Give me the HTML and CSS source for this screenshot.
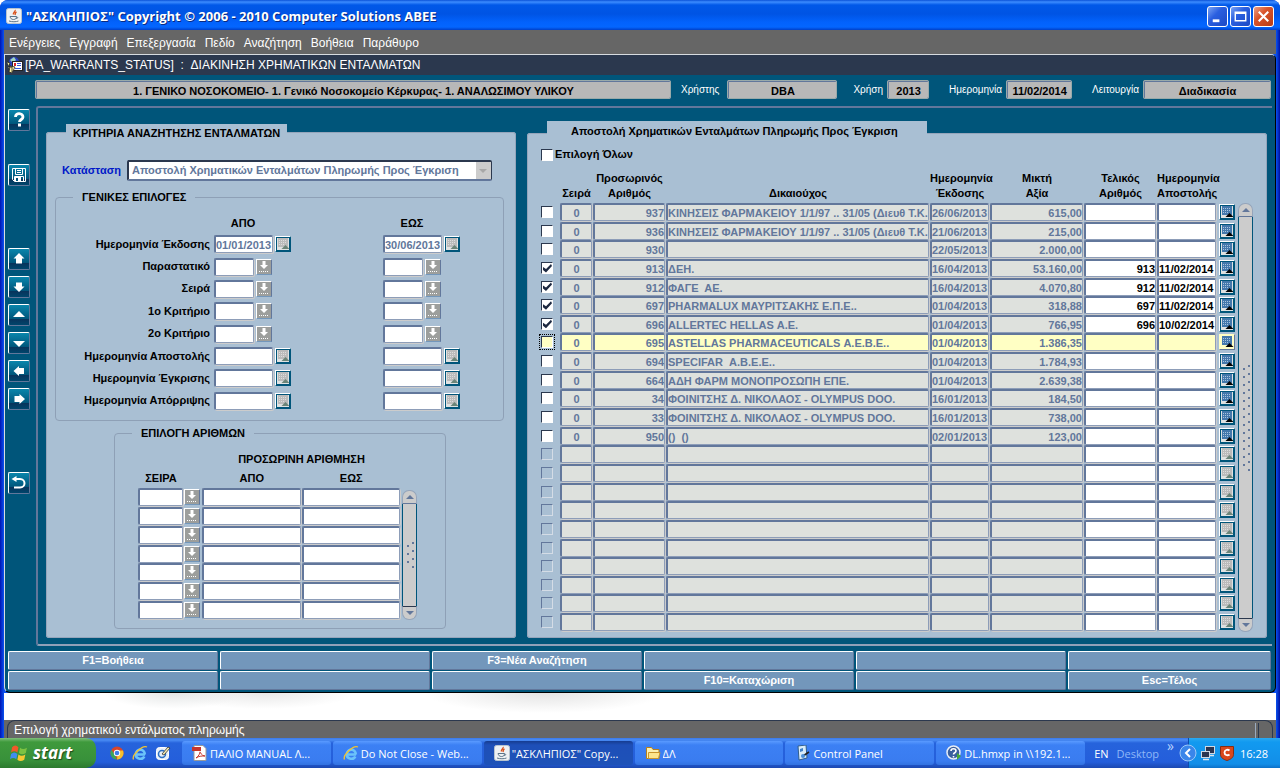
FILE: index.html
```html
<!DOCTYPE html>
<html lang="el">
<head>
    <meta charset="UTF-8">
    <meta name="viewport" content="width=device-width, initial-scale=1.0">
    <title>"ΑΣΚΛΗΠΙΟΣ" Copyright © 2006 - 2010 Computer Solutions ABEE</title>
    <link rel="stylesheet" href="styles.css">
</head>
<body>
    <!-- shared icons -->
    <svg class="sprite" xmlns="http://www.w3.org/2000/svg">
        <symbol id="i-java" viewBox="0 0 16 16">
            <rect x="0.5" y="0.5" width="15" height="15" rx="2" fill="#eef1f4" stroke="#b9c4cf"/>
            <path d="M9 2c1 1.500-2.500 2.500-1.500 4.500M10.500 4c-2 1-1 2-1.500 3" stroke="#d9531e" fill="none" stroke-width="1.400"/>
            <path d="M4 8.500h6.500c0 2-1 3-3 3s-3-1-3.500-3zM10.500 9c2 0 1.500 1.500-.5 1.500M3 13c3 1 7 1 9.500 0" stroke="#5b7489" fill="none"/>
        </symbol>
        <symbol id="i-form" viewBox="0 0 16 16">
            <circle cx="7" cy="5" r="5" fill="#2b44c4"/>
            <path d="M3 3l4-3 2 3-3 3z" fill="#9fd6c0"/>
            <rect x="5.500" y="4.500" width="10" height="9" fill="#fff" stroke="#222"/>
            <path d="M10 6.500h4M10 8.500h4M8 11.500h6" stroke="#3358d8"/>
            <rect x="7" y="6" width="2" height="3" fill="#d22"/>
            <path d="M0 5l3 1-1 3M1 10h4v5M3 9l5 1-3 6-3-1z" fill="#fff3a8" stroke="#222" stroke-width=".8"/>
        </symbol>
        <symbol id="i-help" viewBox="0 0 20 20">
            <path d="M6.500 7c0-5 7.500-4 7.500 0 0 2.500-3.500 2.500-3.500 5" fill="none" stroke="#fff" stroke-width="2.800"/>
            <rect x="9" y="13.500" width="3" height="3" fill="#fff"/>
        </symbol>
        <symbol id="i-save" viewBox="0 0 20 20">
            <path d="M3.500 3.500h13v13h-11l-2-2z" fill="none" stroke="#fff"/>
            <path d="M6.500 3.500v6h7v-6M5.500 16v-4.500h9v4.500" fill="none" stroke="#fff"/>
            <path d="M8 5.500h4M8 7.500h4" stroke="#fff"/>
            <rect x="6" y="12" width="6" height="4" fill="#fff"/>
            <rect x="7" y="13" width="2" height="3" fill="#00557a"/>
        </symbol>
        <symbol id="i-up" viewBox="0 0 20 20"><path d="M10 4l5.500 5.500h-2.500v5h-6v-5h-2.500z" fill="#fff"/></symbol>
        <symbol id="i-down" viewBox="0 0 20 20"><path d="M10 15l-5.500-5.500h2.500v-4h6v4h2.500z" fill="#fff"/></symbol>
        <symbol id="i-tri-up" viewBox="0 0 20 20"><path d="M10 6l6 6h-12z" fill="#fff"/></symbol>
        <symbol id="i-tri-down" viewBox="0 0 20 20"><path d="M10 14l-6-6h12z" fill="#fff"/></symbol>
        <symbol id="i-left" viewBox="0 0 20 20"><path d="M4.500 10l5.500-5v2h5v6h-5v2z" fill="#fff"/></symbol>
        <symbol id="i-right" viewBox="0 0 20 20"><path d="M16 10l-5.500-5v2h-5v6h5v2z" fill="#fff"/></symbol>
        <symbol id="i-exit" viewBox="0 0 20 20">
            <path d="M5 6h6c6 0 6 8.500 0 8.500h-6" fill="none" stroke="#fff" stroke-width="2"/>
            <path d="M7.500 3l-5 3 5 3z" fill="#fff"/>
        </symbol>
        <symbol id="i-list" viewBox="0 0 14 14">
            <path d="M5.500 1h3v4h2.500l-4 4-4-4h2.500z" fill="#fff"/>
            <path d="M2 11.500h10" stroke="#fff" stroke-dasharray="1 1"/>
        </symbol>
        <symbol id="i-cal" viewBox="0 0 14 14">
            <rect x="2" y="1" width="10" height="9" fill="var(--page)"/>
            <path d="M3 3.500h8M3 5.500h8M3 7.500h6" stroke="var(--dots)" stroke-dasharray="1 1"/>
            <path d="M9.500 8l4 4h-8z" fill="var(--tip)"/>
        </symbol>
        <symbol id="i-ie" viewBox="0 0 16 16">
            <path d="M13 9.500h-8.500M12.800 9.500c0-6.500-9-6.500-9 0 0 5 7 5.500 8.500 2" fill="none" stroke="#6cc4fa" stroke-width="2.600"/>
            <path d="M1.500 14.500c-2-4 9-15 13.500-12.500" fill="none" stroke="#f4c430" stroke-width="1.300"/>
        </symbol>
    </svg>

    <div class="window">
        <header class="title-bar">
            <svg class="icon16"><use href="#i-java"/></svg>
            <h1>"ΑΣΚΛΗΠΙΟΣ" Copyright © 2006 - 2010 Computer Solutions ABEE</h1>
            <button class="win-btn" aria-label="Minimize"><svg viewBox="0 0 20 20"><rect x="5" y="13" width="7" height="3" fill="#fff"/></svg></button>
            <button class="win-btn" aria-label="Maximize"><svg viewBox="0 0 20 20"><path d="M4.500 5.500h11v9h-11zM4 6.500h12" fill="none" stroke="#fff" stroke-width="1.500"/></svg></button>
            <button class="win-btn close" aria-label="Close"><svg viewBox="0 0 20 20"><path d="M5 5l10 10M15 5l-10 10" stroke="#fff" stroke-width="2.200"/></svg></button>
        </header>

        <nav class="menu-bar">
            <button>Ενέργειες</button>
            <button>Εγγραφή</button>
            <button>Επεξεργασία</button>
            <button>Πεδίο</button>
            <button>Αναζήτηση</button>
            <button>Βοήθεια</button>
            <button>Παράθυρο</button>
        </nav>

        <div class="app">
            <div class="form-title">
                <svg class="icon16"><use href="#i-form"/></svg>
                <span>[PA_WARRANTS_STATUS] &nbsp;: &nbsp;ΔΙΑΚΙΝΗΣΗ ΧΡΗΜΑΤΙΚΩΝ ΕΝΤΑΛΜΑΤΩΝ</span>
            </div>

            <div class="info-bar">
                <output class="info org">1. ΓΕΝΙΚΟ ΝΟΣΟΚΟΜΕΙΟ- 1. Γενικό Νοσοκομείο Κέρκυρας- 1. ΑΝΑΛΩΣΙΜΟΥ ΥΛΙΚΟΥ</output>
                <label for="user">Χρήστης</label>
                <output class="info user" id="user">DBA</output>
                <label for="year">Χρήση</label>
                <output class="info year" id="year">2013</output>
                <label for="today">Ημερομηνία</label>
                <output class="info today" id="today">11/02/2014</output>
                <label for="mode">Λειτουργία</label>
                <output class="info mode" id="mode">Διαδικασία</output>
            </div>

            <div class="workspace">
                <div class="side-bar">
                    <button aria-label="Βοήθεια"><svg><use href="#i-help"/></svg></button>
                    <button class="after-one" aria-label="Αποθήκευση"><svg><use href="#i-save"/></svg></button>
                    <button class="after-two" aria-label="Πρώτη"><svg><use href="#i-up"/></svg></button>
                    <button aria-label="Τελευταία"><svg><use href="#i-down"/></svg></button>
                    <button aria-label="Προηγούμενη"><svg><use href="#i-tri-up"/></svg></button>
                    <button aria-label="Επόμενη"><svg><use href="#i-tri-down"/></svg></button>
                    <button aria-label="Αριστερά"><svg><use href="#i-left"/></svg></button>
                    <button aria-label="Δεξιά"><svg><use href="#i-right"/></svg></button>
                    <button class="after-two" aria-label="Έξοδος"><svg><use href="#i-exit"/></svg></button>
                </div>

                <main class="panels">
                    <fieldset class="panel criteria">
                        <legend>ΚΡΙΤΗΡΙΑ ΑΝΑΖΗΤΗΣΗΣ ΕΝΤΑΛΜΑΤΩΝ</legend>
                        <div class="status-row">
                            <label for="status">Κατάσταση</label>
                            <span class="select-box">
                                <select id="status">
                                    <option>Αποστολή Χρηματικών Ενταλμάτων Πληρωμής Προς Έγκριση</option>
                                </select>
                            </span>
                        </div>
                        <fieldset class="group general">
                            <legend>ΓΕΝΙΚΕΣ ΕΠΙΛΟΓΕΣ</legend>
                            <div class="range-head"><span></span><span class="head">ΑΠΟ</span><span class="head">ΕΩΣ</span></div>
                            <div class="ranges" id="ranges"></div>
                        </fieldset>
                        <fieldset class="group numbers">
                            <legend>ΕΠΙΛΟΓΗ ΑΡΙΘΜΩΝ</legend>
                            <div class="table-wrap">
                                <table class="number-table">
                                    <colgroup><col class="w-num"><col class="w-list"><col><col></colgroup>
                                    <thead>
                                        <tr><th></th><th></th><th colspan="2">ΠΡΟΣΩΡΙΝΗ ΑΡΙΘΜΗΣΗ</th></tr>
                                        <tr><th>ΣΕΙΡΑ</th><th></th><th>ΑΠΟ</th><th>ΕΩΣ</th></tr>
                                    </thead>
                                    <tbody id="numberRows"></tbody>
                                </table>
                                <div class="scroll">
                                    <button aria-label="Πάνω"></button>
                                    <div class="thumb"><i class="grip short"></i></div>
                                    <button class="dn" aria-label="Κάτω"></button>
                                </div>
                            </div>
                        </fieldset>
                    </fieldset>

                    <fieldset class="panel results">
                        <legend>Αποστολή Χρηματικών Ενταλμάτων Πληρωμής Προς Έγκριση</legend>
                        <label class="select-all"><input type="checkbox">Επιλογή Όλων</label>
                        <div class="table-wrap">
                            <table class="warrants">
                                <colgroup>
                                    <col class="w-check"><col class="w-series"><col class="w-temp"><col><col class="w-issued">
                                    <col class="w-amount"><col class="w-final"><col class="w-sent"><col class="w-cal">
                                </colgroup>
                                <thead>
                                    <tr>
                                        <th></th>
                                        <th>Σειρά</th>
                                        <th>Προσωρινός<br>Αριθμός</th>
                                        <th>Δικαιούχος</th>
                                        <th>Ημερομηνία<br>Έκδοσης</th>
                                        <th>Μικτή<br>Αξία</th>
                                        <th>Τελικός<br>Αριθμός</th>
                                        <th>Ημερομηνία<br>Αποστολής</th>
                                        <th></th>
                                    </tr>
                                </thead>
                                <tbody id="warrantRows"></tbody>
                            </table>
                            <div class="scroll">
                                <button aria-label="Πάνω"></button>
                                <div class="thumb"><i class="grip"></i></div>
                                <button class="dn" aria-label="Κάτω"></button>
                            </div>
                        </div>
                    </fieldset>
                </main>
            </div>

            <div class="fkeys">
                <button>F1=Βοήθεια</button>
                <button aria-label="F2"></button>
                <button>F3=Νέα Αναζήτηση</button>
                <button aria-label="F4"></button>
                <button aria-label="F5"></button>
                <button aria-label="F6"></button>
                <button aria-label="F7"></button>
                <button aria-label="F8"></button>
                <button aria-label="F9"></button>
                <button>F10=Καταχώριση</button>
                <button aria-label="F11"></button>
                <button>Esc=Τέλος</button>
            </div>
        </div>

        <div class="backdrop"></div>
        <div class="status-bar"><p>Επιλογή χρηματικού εντάλματος πληρωμής</p></div>
    </div>

    <footer class="taskbar">
        <button class="start">
            <svg viewBox="0 0 18 18">
                <path d="M2 3c2-2 4-2 6 0l-1 5c-2-1.500-4-1.500-6 0z" fill="#f0592a"/>
                <path d="M9.500 3.500c2 1.500 4 1.500 6.500 0l-1 5c-2.500 1.500-4.500 1.500-6.500 0z" fill="#7dc242"/>
                <path d="M1 9.500c2-2 4-2 6 0l-1 5c-2-1.500-4-1.500-6 0z" fill="#3f8df0"/>
                <path d="M8 10c2 1.500 4 1.500 6.500 0l-1 5c-2.500 1.500-4.500 1.500-6.500 0z" fill="#f8c832"/>
            </svg>start
        </button>
        <div class="quick">
            <button aria-label="Chrome"><svg viewBox="0 0 16 16"><circle cx="8" cy="8" r="6.500" fill="#d7452c"/><path d="M8 14.500a6.500 6.500 0 0 1-5.600-9.800l3.600 5.300z" fill="#3ba55c"/><path d="M8 14.500a6.500 6.500 0 0 0 6-9h-5z" fill="#f6c12d"/><circle cx="8" cy="8" r="3.200" fill="#fff"/><circle cx="8" cy="8" r="2.300" fill="#3f7de8"/></svg></button>
            <button aria-label="Internet Explorer"><svg><use href="#i-ie"/></svg></button>
            <button aria-label="Desktop"><svg viewBox="0 0 16 16"><rect x="1.500" y="2.500" width="12" height="12" rx="3" fill="#e8f0fa" stroke="#fff"/><circle cx="7" cy="9" r="3.500" fill="none" stroke="#2b6fc4" stroke-width="1.500"/><path d="M7 9l6-7 2 1-6 7z" fill="#f5e9b0" stroke="#333" stroke-width=".8"/></svg></button>
        </div>
        <div class="tasks">
            <button class="task"><svg viewBox="0 0 16 16"><path d="M2 .500h9l3 3v12h-12z" fill="#fff" stroke="#999"/><rect x="0" y="2" width="9" height="4" fill="#c6352b"/><path d="M4 13c3-2 4-5 4-6s1 4 5 4c-4 0-6 0-9 2z" fill="none" stroke="#c6352b"/></svg><span>ΠΑΛΙΟ MANUAL Λ...</span></button>
            <button class="task"><svg><use href="#i-ie"/></svg><span>Do Not Close - Web...</span></button>
            <button class="task active"><svg><use href="#i-java"/></svg><span>"ΑΣΚΛΗΠΙΟΣ" Copy...</span></button>
            <button class="task"><svg viewBox="0 0 16 16"><path d="M1.500 13.500v-11h5l1.500 2h6v9z" fill="#fdf0b0" stroke="#b67f1b"/><path d="M3.500 13.500v-6h11.500l-1.500 6z" fill="#fde58c" stroke="#c9952c"/></svg><span>ΔΛ</span></button>
            <button class="task"><svg viewBox="0 0 16 16"><path d="M3 1l8-1 1 13-8 2z" fill="#d8ecfa" stroke="#315e8c"/><path d="M5 4l3-1v3l-3 1z" fill="#3f80c8"/><path d="M8 11l6-4" stroke="#222" stroke-width="1.600"/><circle cx="8" cy="11" r="2" fill="#4a90d9"/></svg><span>Control Panel</span></button>
            <button class="task"><svg viewBox="0 0 16 16"><circle cx="7.500" cy="7.500" r="6.500" fill="#3a5f9e" stroke="#e8eef6" stroke-width="1.500"/><path d="M5 6c0-3 5-3 5 0 0 2-2.500 1.500-2.500 3.500M7.500 11v1.500" stroke="#fff" stroke-width="1.600" fill="none"/><path d="M11 8l4 3-4 4z" fill="#46a837"/></svg><span>DL.hmxp in \\192.1...</span></button>
        </div>
        <div class="lang"><span class="en">EN</span><span class="desk">Desktop</span><span class="more">»</span></div>
        <div class="tray">
            <button class="chevron" aria-label="Απόκρυψη"><svg viewBox="0 0 18 18"><circle cx="9" cy="9" r="8" fill="#3a86ea" stroke="#9cc9f8"/><path d="M11 5l-4 4 4 4" fill="none" stroke="#fff" stroke-width="2"/></svg></button>
            <svg viewBox="0 0 16 16"><rect x="5.500" y="1.500" width="9" height="7" fill="#2b3550" stroke="#cfd8e2"/><rect x="1.500" y="6.500" width="8" height="6" fill="#2b3550" stroke="#cfd8e2"/><path d="M3 14.500h6M10 10.500h4" stroke="#dfe6ec" stroke-width="1.500"/></svg>
            <svg viewBox="0 0 16 16"><path d="M1.500 1.500h13v8c0 3-3 5-6.500 6-3.500-1-6.500-3-6.500-6z" fill="#d9481c" stroke="#8a2c10"/><path d="M10.500 5.500c-2-1.500-5-.5-5 2s3 3.500 5 2" fill="none" stroke="#fff" stroke-width="1.800"/></svg>
            <time>16:28</time>
        </div>
    </footer>

    <script src="script.js"></script>
</body>
</html>
```
FILE: styles.css
```css
* { box-sizing: border-box; }
body { margin: 0; min-height: 100vh; display: flex; flex-direction: column; background-color: #fff; color: #000; font: bold 11px/15px "Liberation Sans", Arial, sans-serif; }
h1, p { margin: 0; }
button, input, select { font: inherit; color: inherit; margin: 0; padding: 0; border: 0; background: none; border-radius: 0; }
button svg, .icon16 { display: block; }
.sprite { display: none; }
.icon16 { width: 16px; height: 16px; flex: none; }

/* window frame */
.window { flex: 1; display: flex; flex-direction: column; padding: 0 4px; background: linear-gradient(90deg, #0014b4 0, #0a52f0 4px, #0a52f0 calc(100% - 4px), #0010a0 100%); border-radius: 8px 8px 0 0; overflow: hidden; }
.title-bar { display: flex; align-items: center; gap: 2px; height: 30px; margin: 0 -4px; padding: 2px 6px 0; background: linear-gradient(#0a52d8 0, #3c8cff 2px, #0058e8 5px, #0054e4 14px, #0262fc 22px, #0466ff 27px, #0040c8 30px); }
.title-bar h1 { flex: 1; padding-left: 2px; color: #fff; font: bold 13px/18px "Open Sans", sans-serif; text-shadow: 1px 1px #0a2a80; white-space: nowrap; }
.win-btn { width: 21px; height: 21px; border: 1px solid #fff; border-radius: 3px; background: linear-gradient(135deg, #7ba4f4, #2a5fe0 40%, #1c49c4); }
.win-btn.close { background: linear-gradient(135deg, #eaa088, #d9532a 40%, #b83c14); }
.menu-bar { display: flex; gap: 9px; height: 24px; padding: 2px 5px 0; background-color: #666; color: #fff; font: 12px/15px "Liberation Sans", Arial, sans-serif; }

/* form */
.app { border: 1px solid #000; border-color: #d8dce0 #000 #000 #d8dce0; border-radius: 0 5px 6px 6px; background-color: #00557a; overflow: hidden; }
.form-title { display: flex; align-items: center; gap: 2px; height: 20px; padding-left: 2px; background-color: #2b384e; color: #fff; font: 12px/15px "Liberation Sans", Arial, sans-serif; }
.info-bar { display: flex; align-items: center; height: 31px; padding: 0 4px 3px 30px; color: #fff; }
.info-bar label { padding: 0 4px 0 20px; font: 10px/15px "Liberation Sans", Arial, sans-serif; }
.info-bar label[for="user"] { padding: 0 8px 0 10px; }
.info-bar label[for="year"] { padding-left: 16px; }
.info { height: 19px; padding: 2px; border: 2px solid #62779b; border-width: 2px 1px 1px 2px; border-radius: 2px; outline: 1px solid #99aaaa; outline-offset: -1px; background-color: #b8b8b8; color: #000; text-align: center; line-height: 15px; white-space: nowrap; overflow: hidden; }
.org { flex: 1; }
.user { width: 110px; }
.year { width: 42px; }
.today { width: 66px; padding: 2px 0; }
.mode { width: 128px; }
.workspace { display: flex; padding-right: 3px; }
.side-bar { display: flex; flex-direction: column; gap: 6px; width: 31px; padding: 3px 0 0 3px; }
.side-bar button { width: 22px; height: 22px; border: 1px solid #fff; border-color: #fff #62779b #62779b #fff; border-radius: 2px; background: linear-gradient(#0a86ac, #00557a 70%, #08345c 72%, #00466c); }
.side-bar svg { width: 20px; height: 20px; }
.side-bar .after-one { margin-top: 27px; }
.side-bar .after-two { margin-top: 56px; }
.panels { flex: 1; display: grid; grid-template-columns: minmax(0, 47fr) minmax(0, 74fr); gap: 11px; min-width: 0; padding: 13px 5px 6px 8px; border: 2px solid #62779b; border-right: 0; border-bottom-color: #8fa0b8; border-radius: 3px 0 0 3px; }
fieldset { min-width: 0; margin: 0; }
.panel { border: 1px solid #95a5bb; border-radius: 3px; background-color: #a9bfd3; }
.panel > legend { background-color: #a9bfd3; white-space: nowrap; }
.criteria { margin-top: 3px; padding: 19px 11px 8px 8px; }
.criteria > legend { margin-left: 11px; padding: 2px 7px 0; }
.results { padding: 0 13px 5px 12px; }
.results > legend { margin-left: 7px; padding: 3px 29px 6px 24px; }

/* fields */
.field { display: block; width: 100%; height: 18px; padding: 1px 0 0; border: 2px solid #62779b; border-width: 2px 1px 1px 2px; border-right-color: #8d9db8; border-bottom-color: #8d9db8; border-radius: 2px; background-color: #fff; box-shadow: 1px 1px #ccc; outline: 0; line-height: 14px; }
.status-row { display: flex; align-items: center; gap: 6px; padding: 0 12px 0 7px; color: #0018c8; }
.select-box { position: relative; flex: 1; display: flex; }
.select-box select { appearance: none; width: 100%; height: 21px; padding: 0 18px 0 3px; border: 1px solid #2b384e; border-top-width: 2px; border-left-width: 2px; border-bottom: 2px solid #62779b; border-radius: 2px; background-color: #fff; color: #62779b; }
.select-box::before { content: ""; position: absolute; right: 1px; top: 2px; bottom: 2px; width: 15px; background-color: #ccc; }
.select-box::after { content: ""; position: absolute; right: 5px; top: 9px; border: 4px solid transparent; border-top-color: #a8a8a8; border-bottom: 0; }
.group { border: 1px solid #8ea0b6; border-radius: 4px; }
.group legend { margin-left: 17px; padding: 0 9px; line-height: 15px; }
.general { margin-top: 9px; padding: 9px 0 8px; }
.range-head, .range { display: grid; grid-template-columns: 154px 165px 1fr; column-gap: 4px; align-items: center; }
.range-head { height: 19px; }
.head { width: 58px; text-align: center; }
.ranges { display: grid; grid-template-rows: repeat(8, 1fr); height: 179px; }
.range > label { text-align: right; }
.pair { display: flex; align-items: center; gap: 2px; }
.pair .field { width: 59px; }
.pair .short { width: 40px; }
.read { color: #62779b; }
.lov { display: block; width: 16px; height: 16px; border: 1px solid #fff; flex: none; }
.lov svg { width: 14px; height: 14px; }
.lov.list { border-color: #fff #62779b #7397bb #fff; background-color: #9c9e9c; }
.lov.cal { --page: #4478ac; --dots: #a9c4de; --tip: #000; border-color: #fff #00557a #00557a #fff; background-color: #dfe2e2; box-shadow: inset 1px 1px #00557a, inset -1px -1px #00557a; }
.empty .lov.cal { --page: #bbb; --dots: #ddd; --tip: #6b8478; }

/* tables */
.table-wrap { display: flex; align-items: flex-end; gap: 1px; }
table { border-collapse: separate; border-spacing: 0; table-layout: fixed; flex: 1; min-width: 0; width: 100%; }
th { padding: 0; font-weight: bold; line-height: 15px; vertical-align: bottom; white-space: nowrap; }
td { padding: 0 1px 0 0; line-height: 0; vertical-align: top; }
.numbers { margin: 5px 58px 0 59px; padding: 9px 28px 8px 23px; }
.numbers legend { margin-left: -6px; }
.number-table { height: 170px; }
.number-table th { height: 19px; vertical-align: middle; }
.w-num { width: 46px; }
.w-list { width: 18px; }
.number-table .lov { margin-top: 1px; }
.warrants { height: 461px; }
.warrants thead th { height: 32px; padding-bottom: 2px; }
.w-check { width: 20px; }
.w-series { width: 33px; }
.w-temp { width: 73px; }
.w-issued { width: 60px; }
.w-amount { width: 94px; }
.w-final { width: 73px; }
.w-sent { width: 60px; }
.w-cal { width: 20px; }
.warrants .locked { background-color: #dee1dd; color: #62779b; }
.warrants .current .field { background-color: #ffffc4; }
.center { text-align: center; }
.right { text-align: right; }
.warrants .lov { margin: 1px 0 0 2px; }
.warrants .current .lov { background-color: #ffffc4; border-color: #ffffc4 #62779b #62779b #ffffc4; box-shadow: none; }
input[type="checkbox"] { appearance: none; display: block; flex: none; width: 12px; height: 12px; border: 1px solid #2b384e; border-right-color: #fff; border-bottom-color: #fff; background-color: #fff; }
input[type="checkbox"]:checked::before { content: ""; display: block; width: 10px; height: 10px; background-color: #1c2840; clip-path: polygon(10% 40%, 40% 60%, 90% 10%, 100% 30%, 40% 95%, 10% 70%); }
input[type="checkbox"]:disabled { border-color: #62779b #d4dce6 #d4dce6 #62779b; background-color: #a9bfd3; }
td input[type="checkbox"] { margin: 3px 0 0 1px; }
.current input[type="checkbox"] { background-color: #ffffc4; outline: 1px dotted #000; outline-offset: 1px; }
.select-all { display: flex; align-items: center; gap: 2px; width: fit-content; height: 19px; margin-bottom: 7px; padding-left: 1px; }

/* scrollbars */
.scroll { display: flex; flex-direction: column; width: 15px; }
.numbers .scroll { height: 130px; }
.results .scroll { height: 429px; }
.scroll button { height: 14px; border: 1px solid #95a5bb; border-bottom: 1px solid #62779b; border-radius: 7px 7px 0 0; background-color: #ccc; }
.scroll button::before { content: ""; display: block; width: 0; margin: auto; border: 4px solid transparent; border-top: 0; border-bottom-color: #62779b; }
.scroll button.dn { border-bottom-color: #95a5bb; border-top: 1px solid #2b384e; border-radius: 0 0 7px 7px; }
.scroll .dn::before { border: 4px solid transparent; border-bottom: 0; border-top-color: #62779b; }
.thumb { flex: 1; display: flex; align-items: center; justify-content: center; border: 1px solid #00557a; border-width: 0 1px; background-color: #ccc; }
.grip { width: 8px; height: 108px; background-image: linear-gradient(135deg, transparent 40%, #62779b 40%, #62779b 60%, transparent 60%), linear-gradient(135deg, transparent 40%, #62779b 40%, #62779b 60%, transparent 60%); background-size: 3px 3px; background-position: 0 4px, 5px 0; background-repeat: repeat-y; background-image: radial-gradient(circle at 2px 5px, #62779b 1px, transparent 1px), radial-gradient(circle at 7px 2px, #62779b 1px, transparent 1px); background-size: 8px 8px; background-position: 0 0; }
.grip.short { height: 28px; }

/* function keys */
.fkeys { display: grid; grid-template-columns: repeat(5, 210fr) 203fr; gap: 1px 2px; padding: 5px 4px 2px 3px; }
.fkeys button { height: 19px; border: 1px solid #fff; border-color: #fff #62779b #62779b #fff; border-radius: 2px; background-color: #7397bb; color: #fff; line-height: 17px; }

.backdrop { flex: 1; background: radial-gradient(ellipse 70px 16px at 170px 0, #e4e6e6, transparent), radial-gradient(ellipse 90px 16px at 260px 0, #e8e8e8, transparent), radial-gradient(ellipse 120px 20px at 540px 0, #e4e4e4, transparent), #fff; }
.status-bar { display: flex; height: 18px; padding: 0 3px; background-color: #666; }
.status-bar p { flex: 1; display: flex; justify-content: space-between; padding: 2px 13px 0 6px; border: 1px solid #2b384e; border-bottom: 0; border-radius: 8px 8px 0 0; color: #fff; font: 12px/15px "Liberation Sans", Arial, sans-serif; }
.status-bar p::after { content: ""; width: 2px; border-left: 1px solid #99aabf; border-right: 1px solid #2b384e; }

/* taskbar */
.taskbar { display: flex; align-items: stretch; height: 30px; background: linear-gradient(#3a78e8 0, #4a8cf4 2px, #2663dc 5px, #245edb 24px, #1c48b0 30px); color: #fff; font: 11px/15px "Open Sans", sans-serif; }
.start { display: flex; align-items: center; gap: 4px; width: 96px; padding: 0 0 0 10px; border-radius: 0 10px 10px 0; background: linear-gradient(#7fbf7a 0, #3f9a3c 4px, #38913a 22px, #2c7a2e 30px); color: #fff; font: italic bold 17px/22px "Open Sans", sans-serif; text-shadow: 1px 1px 1px #1c4a1c; }
.start svg { width: 19px; height: 19px; }
.quick { display: flex; align-items: center; gap: 7px; padding: 0 11px 0 13px; }
.quick svg, .task svg, .tray > svg { width: 16px; height: 16px; flex: none; }
.tasks { flex: 1; display: flex; gap: 2px; padding: 3px 0; min-width: 0; }
.task { flex: 1; display: flex; align-items: center; gap: 2px; min-width: 0; padding-left: 10px; border-radius: 3px; background: linear-gradient(#5a9aff, #3c80f4 4px, #3a7cf0 20px, #3272e0); white-space: nowrap; }
.task.active { background: linear-gradient(#163c90, #1e4fb8 4px, #1e52b8); }
.task span { overflow: hidden; }
.lang { display: flex; align-items: center; gap: 8px; padding: 0 14px 0 9px; }
.desk { color: #8fb8f8; }
.more { align-self: flex-start; color: #b8d4ff; font-size: 14px; }
.tray { display: flex; align-items: center; gap: 3px; width: 92px; border-left: 1px solid #0c4cae; background: linear-gradient(#2aa8f0 0, #129af0 4px, #128ee8 26px, #0c70c8 30px); }
.chevron { margin-left: -10px; }
.chevron svg { width: 18px; height: 18px; }
.tray time { padding-left: 2px; }
```
FILE: script.js
```js
const listButton = (label) => `<button class="lov list" aria-label="${label}"><svg><use href="#i-list"/></svg></button>`;
const calButton = (label) => `<button class="lov cal" aria-label="${label}"><svg><use href="#i-cal"/></svg></button>`;

const criteria = [
    ['Ημερομηνία Έκδοσης', true, '01/01/2013', '30/06/2013'],
    ['Παραστατικό', false, '', ''],
    ['Σειρά', false, '', ''],
    ['1ο Κριτήριο', false, '', ''],
    ['2ο Κριτήριο', false, '', ''],
    ['Ημερομηνία Αποστολής', true, '', ''],
    ['Ημερομηνία Έγκρισης', true, '', ''],
    ['Ημερομηνία Απόρριψης', true, '', '']
];

function pair(id, isDate, value, name) {
    return `<div class="pair${isDate ? ' empty' : ''}">
        <input class="field read ${isDate ? '' : 'short'}" id="${id}" aria-label="${name}" value="${value}">
        ${isDate ? calButton(name) : listButton(name)}
    </div>`;
}

document.getElementById('ranges').innerHTML = criteria.map(([name, isDate, from, to], i) => `
    <div class="range">
        <label for="from${i}">${name}</label>
        ${pair('from' + i, isDate, from, name)}
        ${pair('to' + i, isDate, to, name)}
    </div>`).join('');

document.getElementById('numberRows').innerHTML = Array.from({ length: 7 }, () => `
    <tr>
        <td><input class="field" aria-label="Σειρά"></td>
        <td>${listButton('Σειρά')}</td>
        <td><input class="field" aria-label="Από"></td>
        <td><input class="field" aria-label="Έως"></td>
    </tr>`).join('');

// checked, temp number, payee, issued, amount, final number, sent
const warrants = [
    [0, '937', 'ΚΙΝΗΣΕΙΣ ΦΑΡΜΑΚΕΙΟΥ 1/1/97 .. 31/05 (Διευθ Τ.Κ.:1', '26/06/2013', '615,00', '', ''],
    [0, '936', 'ΚΙΝΗΣΕΙΣ ΦΑΡΜΑΚΕΙΟΥ 1/1/97 .. 31/05 (Διευθ Τ.Κ.:1', '21/06/2013', '215,00', '', ''],
    [0, '930', '', '22/05/2013', '2.000,00', '', ''],
    [1, '913', 'ΔΕΗ.', '16/04/2013', '53.160,00', '913', '11/02/2014'],
    [1, '912', 'ΦΑΓΕ  ΑΕ.', '16/04/2013', '4.070,80', '912', '11/02/2014'],
    [1, '697', 'PHARMALUX ΜΑΥΡΙΤΣΑΚΗΣ Ε.Π.Ε..', '01/04/2013', '318,88', '697', '11/02/2014'],
    [1, '696', 'ALLERTEC HELLAS Α.Ε.', '01/04/2013', '766,95', '696', '10/02/2014'],
    [0, '695', 'ASTELLAS PHARMACEUTICALS Α.Ε.Β.Ε..', '01/04/2013', '1.386,35', '', ''],
    [0, '694', 'SPECIFAR  Α.Β.Ε.Ε..', '01/04/2013', '1.784,93', '', ''],
    [0, '664', 'ΑΔΗ ΦΑΡΜ ΜΟΝΟΠΡΟΣΩΠΗ ΕΠΕ.', '01/04/2013', '2.639,38', '', ''],
    [0, '34', 'ΦΟΙΝΙΤΣΗΣ Δ. ΝΙΚΟΛΑΟΣ - OLYMPUS DOO.', '16/01/2013', '184,50', '', ''],
    [0, '33', 'ΦΟΙΝΙΤΣΗΣ Δ. ΝΙΚΟΛΑΟΣ - OLYMPUS DOO.', '16/01/2013', '738,00', '', ''],
    [0, '950', '()  ()', '02/01/2013', '123,00', '', '']
];
const visibleRows = 23;
const currentRow = 7;

function warrantRow(i) {
    const row = warrants[i];
    const [checked, temp, payee, issued, amount, final, sent] = row || [0, '', '', '', '', '', ''];
    const cell = (value, cls, name) => `<td><input class="field ${cls}" aria-label="${name}" value="${value}"></td>`;
    return `<tr class="${row ? '' : 'empty'}${i === currentRow ? 'current' : ''}">
        <td><input type="checkbox" aria-label="Επιλογή" ${checked ? 'checked' : ''} ${row ? '' : 'disabled'}></td>
        ${cell(row ? '0' : '', 'locked center', 'Σειρά')}
        ${cell(temp, 'locked right', 'Προσωρινός Αριθμός')}
        ${cell(payee, 'locked', 'Δικαιούχος')}
        ${cell(issued, 'locked', 'Ημερομηνία Έκδοσης')}
        ${cell(amount, 'locked right', 'Μικτή Αξία')}
        ${cell(final, 'right', 'Τελικός Αριθμός')}
        ${cell(sent, '', 'Ημερομηνία Αποστολής')}
        <td>${calButton('Ημερολόγιο')}</td>
    </tr>`;
}

document.getElementById('warrantRows').innerHTML = Array.from({ length: visibleRows }, (_, i) => warrantRow(i)).join('');
```
